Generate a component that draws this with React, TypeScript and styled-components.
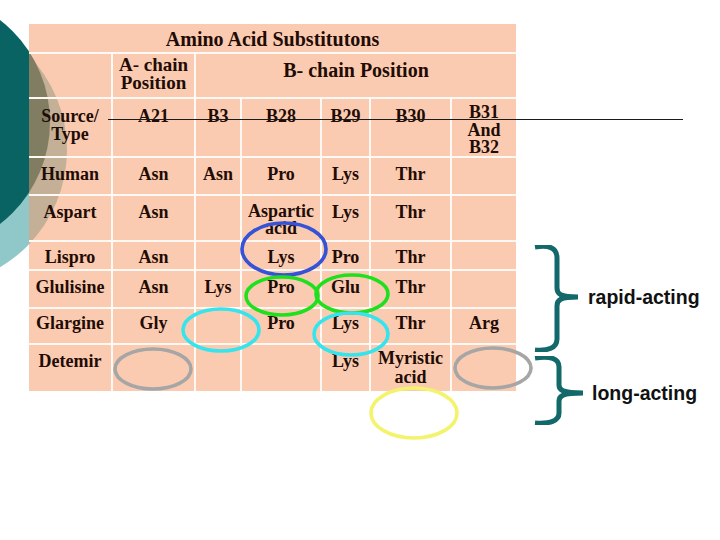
import React from 'react';
import styled, {createGlobalStyle} from 'styled-components';

const GlobalStyle = createGlobalStyle`
    html, body {
        margin: 0;
        padding: 0;
        background: #ffffff;
    }
    #root {
        width: 720px;
        height: 540px;
        overflow: hidden;
    }
`;

type Cell = {
    text?: string;
    span?: number;
    size?: number;
    pad?: number;
    lh?: number;
};

const COLS = [84, 83, 46, 80, 49, 81, 64];
const ROWS = [30, 45, 59, 38, 46, 29, 38, 36, 46];

const c = (text = '', extra: Partial<Cell> = {}): Cell => ({text, ...extra});

const TABLE: Cell[][] = [
    [c('Amino Acid Substitutons', {span: 7, size: 20, pad: 6})],
    [c(), c('A- chain\nPosition', {size: 19, pad: 2}), c('B- chain Position', {span: 5, size: 20, pad: 7})],
    [c('Source/\nType', {pad: 8}), c('A21', {pad: 8}), c('B3', {pad: 8}), c('B28', {pad: 8}), c('B29', {pad: 8}), c('B30', {pad: 8}), c('B31\nAnd\nB32', {pad: 5, lh: 17.5})],
    [c('Human', {pad: 7}), c('Asn', {pad: 7}), c('Asn', {pad: 7}), c('Pro', {pad: 7}), c('Lys', {pad: 7}), c('Thr', {pad: 7}), c()],
    [c('Aspart', {pad: 7}), c('Asn', {pad: 7}), c(), c('Aspartic\nacid', {pad: 7, lh: 17}), c('Lys', {pad: 7}), c('Thr', {pad: 7}), c()],
    [c('Lispro'), c('Asn'), c(), c('Lys'), c('Pro'), c('Thr'), c()],
    [c('Glulisine', {pad: 7}), c('Asn', {pad: 7}), c('Lys', {pad: 7}), c('Pro', {pad: 7}), c('Glu', {pad: 7}), c('Thr', {pad: 7}), c()],
    [c('Glargine', {pad: 5}), c('Gly', {pad: 5}), c(), c('Pro', {pad: 5}), c('Lys', {pad: 5}), c('Thr', {pad: 5}), c('Arg', {pad: 5})],
    [c('Detemir', {pad: 7}), c(), c(), c(), c('Lys', {pad: 7}), c('Myristic\nacid', {pad: 4, lh: 19}), c()],
];

// highlight rings drawn over the table
const RINGS = [
    {cx: 284, cy: 249, rx: 42, ry: 26, color: '#3553d6'},
    {cx: 282, cy: 296, rx: 36, ry: 19, color: '#1ee01e'},
    {cx: 352, cy: 294, rx: 36, ry: 19, color: '#1ee01e'},
    {cx: 221, cy: 330, rx: 38, ry: 21, color: '#35e4ec'},
    {cx: 351, cy: 334, rx: 37, ry: 21, color: '#35e4ec'},
    {cx: 153, cy: 369, rx: 38, ry: 20, color: '#a6a6a6'},
    {cx: 493, cy: 368, rx: 38, ry: 20, color: '#a6a6a6'},
    {cx: 414, cy: 413, rx: 43, ry: 25, color: '#f3f36c'},
];

const BRACES = [
    {
        label: 'rapid-acting',
        height: 107,
        d: 'M2 2 C15 0 24 2 24 13 L24 43 C24 49 27 52 45 52 M45 52 C27 52 24 55 24 61 L24 94 C24 103 15 106 2 105',
        gap: 3,
        dy: -2,
    },
    {
        label: 'long-acting',
        height: 69,
        d: 'M2 2 C17 0 26 2 26 11 L26 29 C26 34 29 37 50 37 M50 37 C29 37 26 40 26 45 L26 57 C26 65 17 68 2 67',
        gap: 7,
        dy: 2,
    },
];

export default function App() {
    return (
        <>
            <GlobalStyle />
            <Slide>
                <DarkCircle />
                <LightCircle />

                <Table>
                    {TABLE.map((row, ri) => {
                        let col = 0;
                        return row.map((cell, ci) => {
                            const span = cell.span ?? 1;
                            col += span;
                            return (
                                <TCell
                                    key={`${ri}-${ci}`}
                                    $span={span}
                                    $lastCol={col === COLS.length}
                                    $lastRow={ri === ROWS.length - 1}
                                    $size={cell.size ?? 18}
                                    $pad={cell.pad ?? 6}
                                    $lh={cell.lh ?? 18}
                                >
                                    {cell.text}
                                </TCell>
                            );
                        });
                    })}
                </Table>

                <Aside>
                    {BRACES.map((b) => (
                        <BraceGroup key={b.label}>
                            <BraceSvg width={52} height={b.height} viewBox={`0 0 52 ${b.height}`}>
                                <path d={b.d} fill="none" stroke="#13686a" strokeWidth={5} />
                            </BraceSvg>
                            <Label $gap={b.gap} $dy={b.dy}>{b.label}</Label>
                        </BraceGroup>
                    ))}
                </Aside>

                <HeaderRule />

                <Marks viewBox="0 0 720 540">
                    {RINGS.map((r, i) => (
                        <ellipse key={i} cx={r.cx} cy={r.cy} rx={r.rx} ry={r.ry} fill="none" stroke={r.color} strokeWidth={3.6} />
                    ))}
                </Marks>
            </Slide>
        </>
    );
}

const Slide = styled.div`
    position: relative;
    display: flex;
    align-items: flex-start;
    width: 720px;
    height: 540px;
    overflow: hidden;
    background: #ffffff;
    padding: 24px 0 0 29px;
    box-sizing: border-box;
`;

const DarkCircle = styled.div`
    position: absolute;
    left: -208px;
    top: -7px;
    width: 258px;
    height: 258px;
    border-radius: 50%;
    background: #0a6363;
    z-index: 1;
`;

const LightCircle = styled.div`
    position: absolute;
    left: -205px;
    top: 14px;
    width: 272px;
    height: 272px;
    border-radius: 50%;
    background: #90c8c9;
    z-index: 0;
`;

const Table = styled.div`
    position: relative;
    z-index: 2;
    flex: none;
    display: grid;
    grid-template-columns: ${COLS.map((w) => `${w}px`).join(' ')};
    grid-template-rows: ${ROWS.map((h) => `${h}px`).join(' ')};
    font-family: "Liberation Serif", "Times New Roman", serif;
    font-weight: 700;
    color: #1f0c05;
`;

const TCell = styled.div<{$span: number; $lastCol: boolean; $lastRow: boolean; $size: number; $pad: number; $lh: number}>`
    grid-column: span ${(p) => p.$span};
    box-sizing: border-box;
    background: rgba(247, 151, 99, 0.5);
    border-right: ${(p) => (p.$lastCol ? 'none' : '2px solid #fff8f3')};
    border-bottom: ${(p) => (p.$lastRow ? 'none' : '2px solid #fff8f3')};
    padding-top: ${(p) => p.$pad}px;
    font-size: ${(p) => p.$size}px;
    line-height: ${(p) => p.$lh}px;
    text-align: center;
    white-space: pre-line;
`;

const Aside = styled.div`
    display: flex;
    flex-direction: column;
    gap: 4px;
    margin: 221px 0 0 17px;
`;

const BraceGroup = styled.div`
    display: flex;
    align-items: center;
`;

const BraceSvg = styled.svg`
    flex: none;
    display: block;
`;

const Label = styled.div<{$gap: number; $dy: number}>`
    margin-left: ${(p) => p.$gap}px;
    padding-top: ${(p) => Math.max(p.$dy, 0) * 2}px;
    padding-bottom: ${(p) => Math.max(-p.$dy, 0) * 2}px;
    font-family: "Liberation Sans", Arial, sans-serif;
    font-weight: 700;
    font-size: 19.5px;
    line-height: 20px;
    color: #111111;
    white-space: nowrap;
`;

const HeaderRule = styled.div`
    position: absolute;
    left: 108px;
    top: 119px;
    width: 575px;
    height: 1px;
    background: #1a1a1a;
    z-index: 3;
`;

const Marks = styled.svg`
    position: absolute;
    left: 0;
    top: 0;
    width: 720px;
    height: 540px;
    z-index: 4;
    pointer-events: none;
`;
